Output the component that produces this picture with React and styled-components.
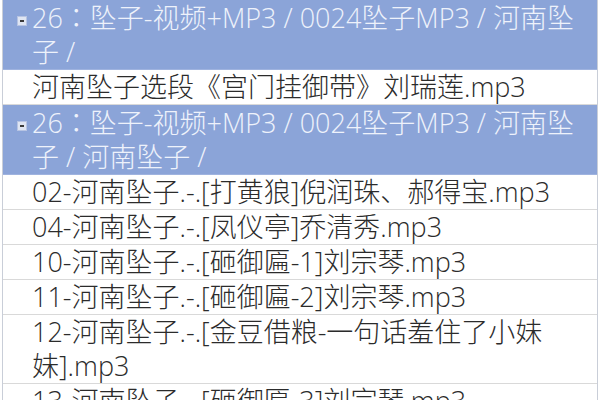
import React from "react";
import styled, { createGlobalStyle } from "styled-components";

const Global = createGlobalStyle`
  html, body { margin: 0; padding: 0; background: #ffffff; overflow: hidden; }
  body { font-family: "Open Sans", "Noto Sans CJK SC", sans-serif; }
`;

const List = styled.div`
  width: 594px;
  margin-left: 2px;
  border-left: 1px solid #c9ced8;
  border-right: 1px solid #c9ced8;
  font-size: 27px;
  line-height: 34px;
  font-weight: 300;
`;

const Item = styled.div`
  display: grid;
  grid-template-columns: 29px 1fr;
  padding-right: 10px;
  background: ${(p) => (p.$group ? "#8ba4d8" : "#ffffff")};
  color: ${(p) => (p.$group ? "#eef2fb" : "#2b2b2b")};
  border-bottom: 1px solid ${(p) => (p.$group ? "#9fb3df" : "#d9d9d9")};
`;

const Gutter = styled.div`
  position: relative;
  height: 34px;
`;

const Toggle = styled.span`
  position: absolute;
  left: 14px;
  top: 16px;
  width: 8px;
  height: 8px;
  background: #dfe5f2;
  border: 1px solid #b7c4e3;
  &::after {
    content: "";
    position: absolute;
    left: 2px;
    top: 3px;
    width: 4px;
    height: 2px;
    background: #3a3a3a;
  }
`;

const Text = styled.div`
  word-break: normal;
  overflow-wrap: anywhere;
`;

const Colon = styled.span`
  font-family: "Noto Sans CJK JP", "Noto Sans CJK SC", sans-serif;
`;

const items = [
  { group: true, no: "26", text: "坠子-视频+MP3 / 0024坠子MP3 / 河南坠子 /" },
  { text: "河南坠子选段《宫门挂御带》刘瑞莲.mp3" },
  { group: true, no: "26", text: "坠子-视频+MP3 / 0024坠子MP3 / 河南坠子 / 河南坠子 /" },
  { text: "02-河南坠子.-.[打黄狼]倪润珠、郝得宝.mp3" },
  { text: "04-河南坠子.-.[凤仪亭]乔清秀.mp3" },
  { text: "10-河南坠子.-.[砸御匾-1]刘宗琴.mp3" },
  { text: "11-河南坠子.-.[砸御匾-2]刘宗琴.mp3" },
  { text: "12-河南坠子.-.[金豆借粮-一句话羞住了小妹妹].mp3" },
  { text: "13-河南坠子.-.[砸御匾-3]刘宗琴.mp3" },
];

export default function App() {
  return (
    <>
      <Global />
      <List>
        {items.map((it, i) => (
          <Item key={i} $group={it.group}>
            <Gutter>{it.group && <Toggle />}</Gutter>
            <Text>
              {it.no && (
                <>
                  {it.no}
                  <Colon>：</Colon>
                </>
              )}
              {it.text}
            </Text>
          </Item>
        ))}
      </List>
    </>
  );
}
